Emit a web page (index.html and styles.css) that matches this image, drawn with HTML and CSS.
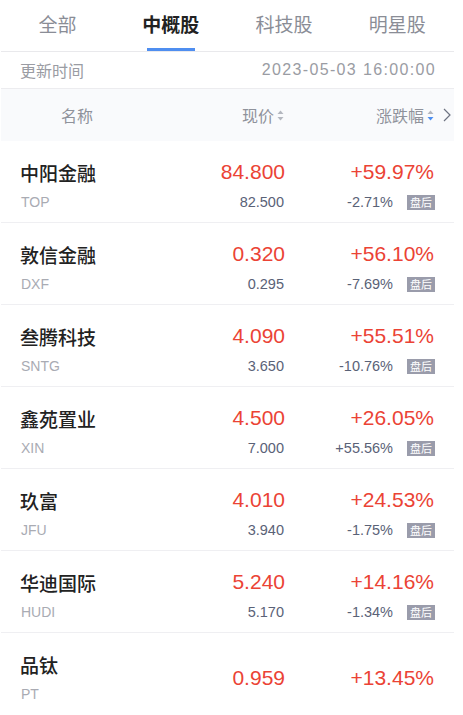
FILE: index.html
```html
<!DOCTYPE html>
<html lang="zh-CN">
<head>
<meta charset="utf-8">
<title>中概股</title>
<link rel="stylesheet" href="styles.css">
</head>
<body>
<div class="page">
  <nav class="tabs">
    <div class="tab">全部</div>
    <div class="tab active">中概股</div>
    <div class="tab">科技股</div>
    <div class="tab">明星股</div>
  </nav>
  <div class="update">
    <span>更新时间</span>
    <span class="date">2023-05-03 16:00:00</span>
  </div>
  <div class="head">
    <div class="h-name">名称</div>
    <div class="h-col">现价<svg class="sort" viewBox="0 0 7 11" width="7" height="11"><path d="M3.5 0.5 L6.5 4 H0.5 Z" fill="#b4b7bf"/><path d="M3.5 10.5 L6.5 7 H0.5 Z" fill="#b4b7bf"/></svg></div>
    <div class="h-col">涨跌幅<svg class="sort" viewBox="0 0 7 11" width="7" height="11"><path d="M3.5 0.5 L6.5 4 H0.5 Z" fill="#b4b7bf"/><path d="M3.5 10.5 L6.5 7 H0.5 Z" fill="#4d8ef0"/></svg></div>
    <svg class="more" viewBox="0 0 8 14" width="8" height="14"><path d="M1 1 L7 7 L1 13" fill="none" stroke="#6e7382" stroke-width="1.2"/></svg>
  </div>
  <div class="list">
    <div class="row">
      <div class="name">中阳金融</div>
      <div class="price">84.800</div>
      <div class="chg">+59.97%</div>
      <div class="code">TOP</div>
      <div class="sub">82.500</div>
      <div class="subchg">-2.71%<span class="badge">盘后</span></div>
    </div>
    <div class="row">
      <div class="name">敦信金融</div>
      <div class="price">0.320</div>
      <div class="chg">+56.10%</div>
      <div class="code">DXF</div>
      <div class="sub">0.295</div>
      <div class="subchg">-7.69%<span class="badge">盘后</span></div>
    </div>
    <div class="row">
      <div class="name">叁腾科技</div>
      <div class="price">4.090</div>
      <div class="chg">+55.51%</div>
      <div class="code">SNTG</div>
      <div class="sub">3.650</div>
      <div class="subchg">-10.76%<span class="badge">盘后</span></div>
    </div>
    <div class="row">
      <div class="name">鑫苑置业</div>
      <div class="price">4.500</div>
      <div class="chg">+26.05%</div>
      <div class="code">XIN</div>
      <div class="sub">7.000</div>
      <div class="subchg">+55.56%<span class="badge">盘后</span></div>
    </div>
    <div class="row">
      <div class="name">玖富</div>
      <div class="price">4.010</div>
      <div class="chg">+24.53%</div>
      <div class="code">JFU</div>
      <div class="sub">3.940</div>
      <div class="subchg">-1.75%<span class="badge">盘后</span></div>
    </div>
    <div class="row">
      <div class="name">华迪国际</div>
      <div class="price">5.240</div>
      <div class="chg">+14.16%</div>
      <div class="code">HUDI</div>
      <div class="sub">5.170</div>
      <div class="subchg">-1.34%<span class="badge">盘后</span></div>
    </div>
    <div class="row single">
      <div class="name">品钛</div>
      <div class="price">0.959</div>
      <div class="chg">+13.45%</div>
      <div class="code">PT</div>
    </div>
  </div>
</div>
</body>
</html>
```
FILE: styles.css
```css
* { box-sizing: border-box; }
html, body { margin: 0; padding: 0; background: #fff; }
body {
  font-family: "Liberation Sans", "Noto Sans CJK SC", Arial, sans-serif;
  color: #222;
}
.page {
  width: 454px;
  padding-left: 1px;
}
.tabs {
  display: grid;
  grid-template-columns: repeat(4, 1fr);
  height: 52px;
  border-bottom: 1px solid #e9e9ec;
}
.tab {
  position: relative;
  text-align: center;
  font-family: "Noto Sans CJK SC", sans-serif;
  font-size: 19px;
  line-height: 48px;
  color: #8a8d96;
}
.tab.active {
  color: #222;
  font-weight: 600;
}
.tab.active::after {
  content: "";
  position: absolute;
  left: 50%;
  bottom: 0;
  width: 48px;
  height: 3px;
  margin-left: -24px;
  background: #4f8ef0;
}
.update {
  display: flex;
  justify-content: space-between;
  align-items: center;
  height: 37px;
  padding: 0 19px 0 19px;
  border-bottom: 1px solid #ececef;
  font-size: 16px;
  color: #9a9ca3;
}
.update span:first-child { font-family: "Noto Sans CJK SC", sans-serif; }
.date { letter-spacing: 1.35px; margin-right: -1px; }
.head {
  position: relative;
  display: grid;
  grid-template-columns: 1fr 120px 150px;
  align-items: center;
  height: 52px;
  padding-right: 19px;
  background: #f9fafc;
  font-family: "Noto Sans CJK SC", sans-serif;
  font-size: 16px;
  color: #8f929b;
}
.h-name { padding-left: 60px; }
.h-col {
  display: flex;
  justify-content: flex-end;
  align-items: center;
}
.sort { margin-left: 3px; margin-right: 1px; }
.more {
  position: absolute;
  right: 3px;
  top: 19px;
}
.row {
  display: grid;
  grid-template-columns: 1fr 120px 150px;
  grid-template-rows: 26px 20px;
  row-gap: 7px;
  padding: 18px 19px 10px 19px;
  border-bottom: 1px solid #efeff2;
  align-items: center;
}
.row.single { border-bottom: 0; }
.name {
  font-family: "Noto Sans CJK SC", sans-serif;
  font-size: 19px;
  font-weight: 500;
  color: #222;
}
.price, .chg {
  text-align: right;
  font-size: 21px;
  color: #eb4335;
}
.chg { padding-right: 1px; }
.code {
  font-size: 14px;
  color: #a9abb3;
  padding-left: 1px;
}
.sub, .subchg {
  font-size: 14.5px;
  color: #5a6277;
  text-align: right;
}
.sub { padding-right: 1px; }
.subchg {
  display: flex;
  justify-content: flex-end;
  align-items: center;
}
.badge {
  display: inline-block;
  margin-left: 14px;
  width: 28px;
  height: 15px;
  line-height: 15px;
  text-align: center;
  background: #9a9cab;
  color: #fff;
  font-family: "Noto Sans CJK SC", sans-serif;
  font-size: 11px;
}
.row.single .price, .row.single .chg {
  grid-row: 1 / span 2;
  align-self: center;
}
.row.single .price { grid-column: 2; }
.row.single .chg { grid-column: 3; }
.row.single .code { grid-column: 1; grid-row: 2; }
```
